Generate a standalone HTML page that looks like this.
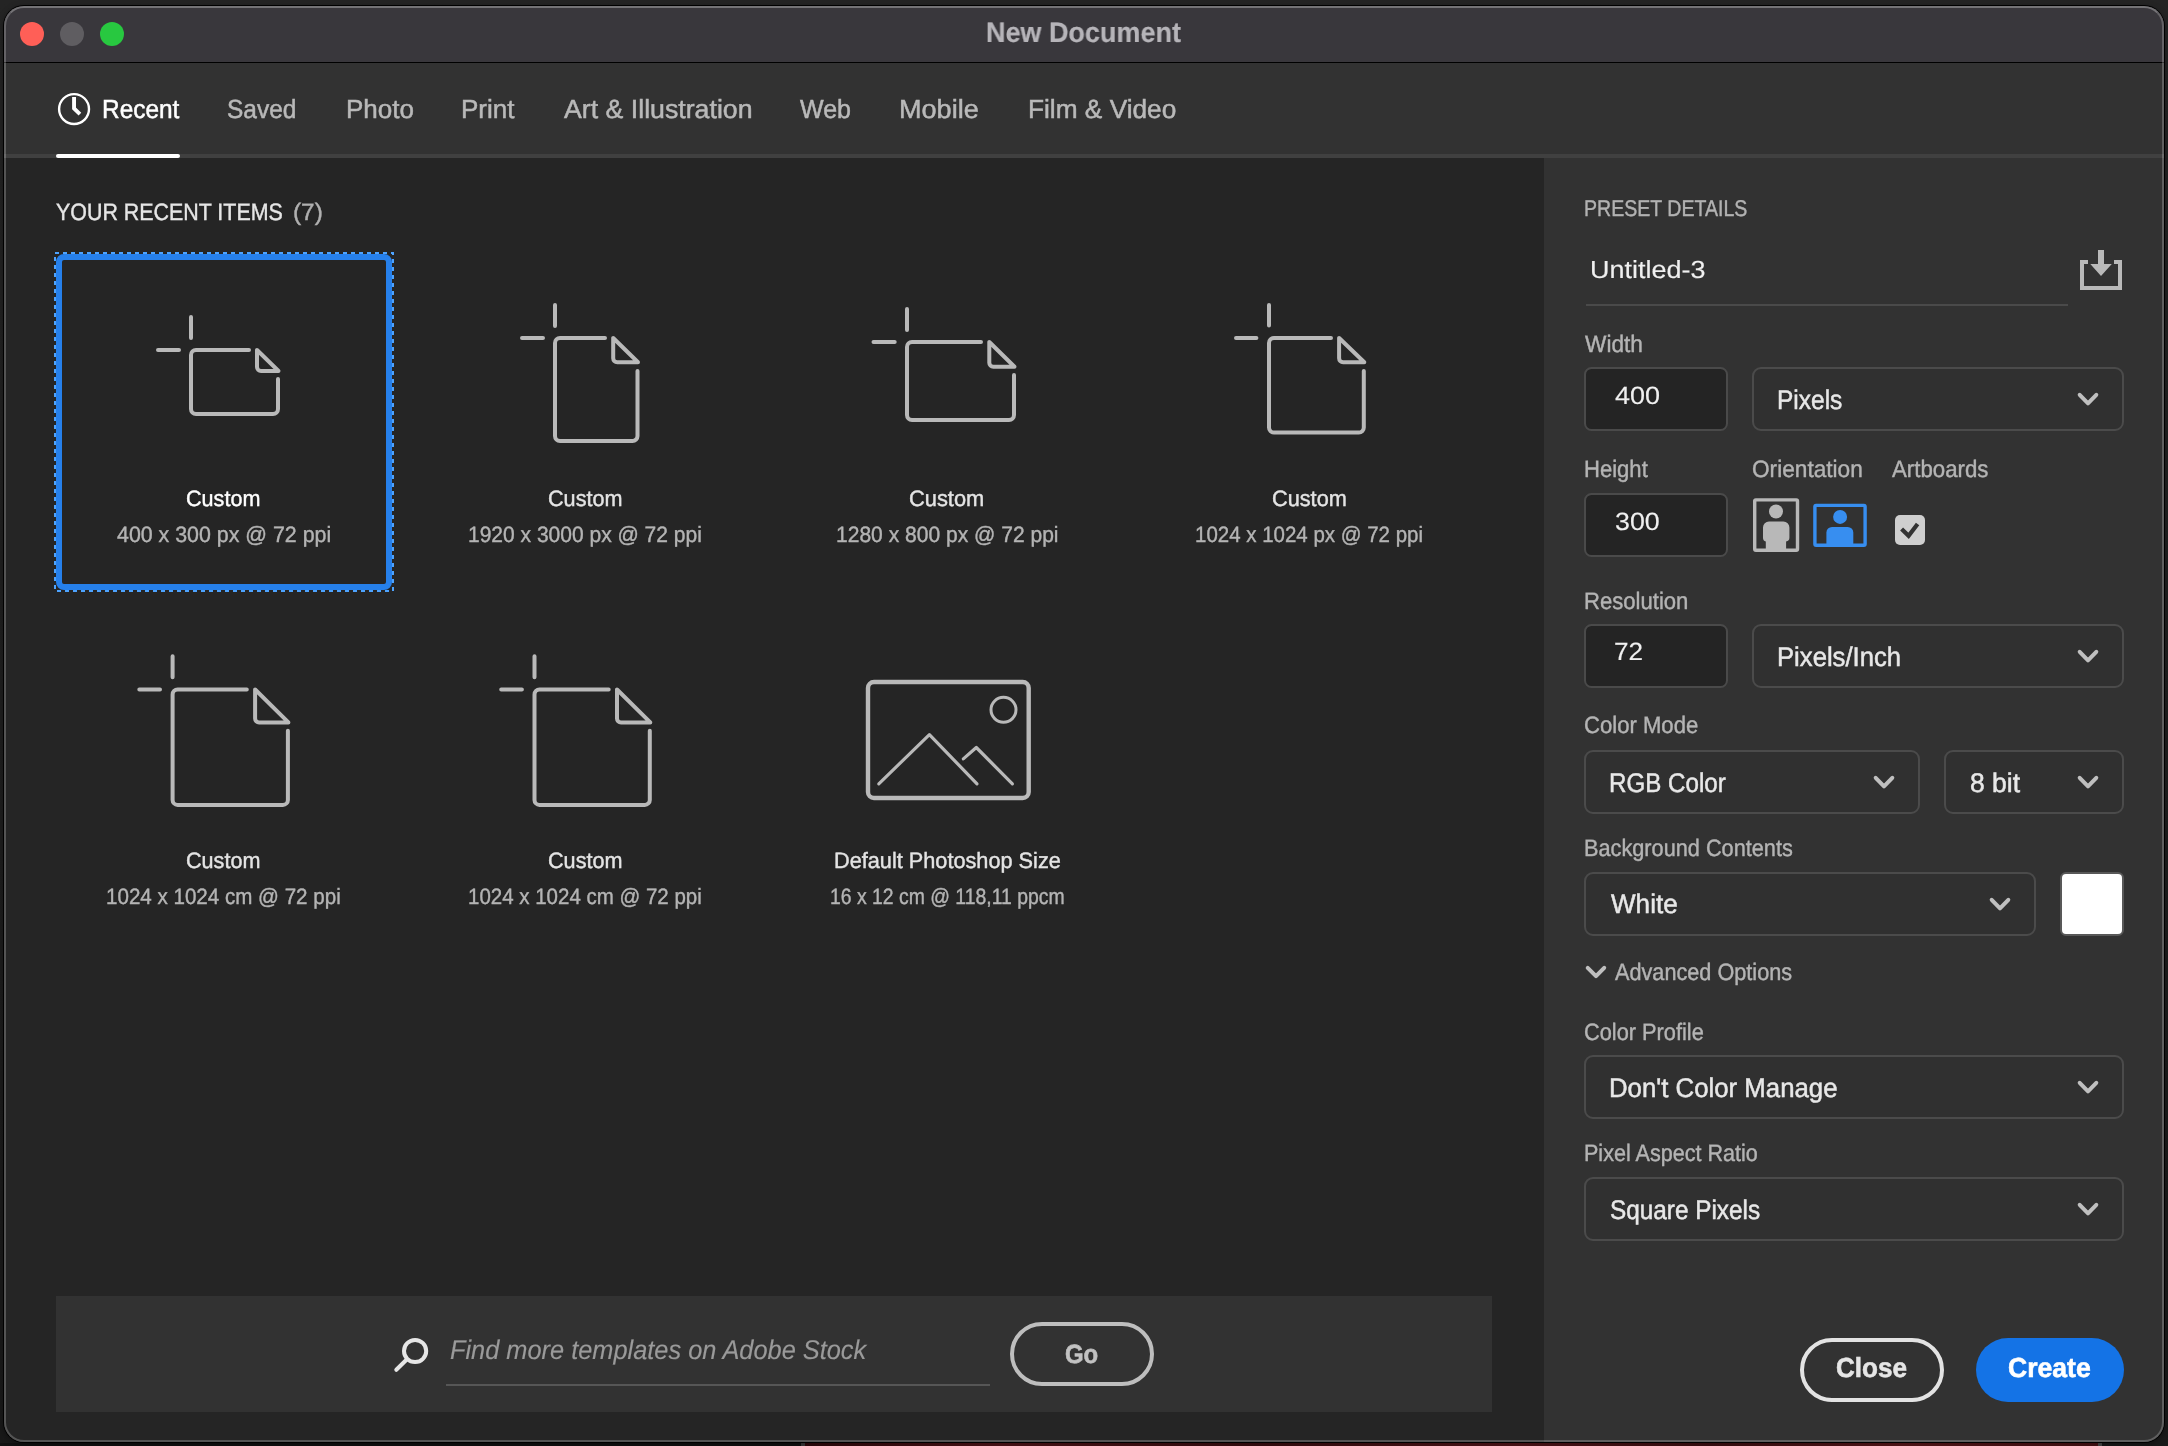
<!DOCTYPE html>
<html lang="en">
<head>
<meta charset="utf-8">
<title>New Document</title>
<style>
html,body{margin:0;padding:0;}
body{width:2168px;height:1446px;overflow:hidden;background:linear-gradient(#242424,#1f1f1f 50%,#191919);position:relative;font-family:'Liberation Sans', sans-serif;}
ul,li,h1,h2,label,header,nav,main,aside,footer,section{margin:0;padding:0;list-style:none;font-weight:normal;font-size:inherit;display:block;}
/* every component wrapper is a zero-size box anchored at the page origin; children use page coordinates */
.g,ul,li,h1,h2,label,nav,main,aside,footer,section,header{position:absolute;left:0;top:0;width:0;height:0;}
.layer{will-change:transform;}
.t{position:absolute;white-space:nowrap;transform-origin:0 0;display:block;text-rendering:geometricPrecision;}
svg{position:absolute;left:0;top:0;overflow:visible;}
/* desktop peeking out below the window */
#desk{position:absolute;left:801px;top:1443px;width:1293px;height:3px;background:linear-gradient(90deg,#30090c,#54151a 15%,#3c0e11 35%,#56161b 55%,#401013 70%,#5e181c 85%,#4a1215);border-left:4px solid #3c3c3c;border-right:4px solid #4c4c4c;}
#deskl{position:absolute;left:0;top:1443px;width:801px;height:3px;background:#121212;}
/* window chrome */
#win{position:absolute;left:4px;top:6px;width:2160px;height:1436px;border-radius:20px;background:#252525;box-shadow:0 0 0 1px #000,0 2px 6px 1px rgba(0,0,0,.35);overflow:hidden;}
#winedge{position:absolute;left:4px;top:6px;width:2160px;height:1436px;border-radius:20px;box-sizing:border-box;border:2px solid rgba(255,255,255,.22);border-top-color:rgba(255,255,255,.30);pointer-events:none;}
#inner{position:absolute;left:-4px;top:-6px;width:2168px;height:1446px;}
#titlebar-bg{position:absolute;left:0;top:0;width:2168px;height:62px;background:#39373c;}
#titleline{position:absolute;left:0;top:62px;width:2168px;height:1px;background:#000;}
.light{position:absolute;top:22px;width:24px;height:24px;border-radius:50%;}
/* category tabs */
#tabs-bg{position:absolute;left:0;top:63px;width:2168px;height:91px;background:#323232;}
#tabsep{position:absolute;left:0;top:154px;width:2168px;height:4px;background:#404040;}
#tabsel{position:absolute;left:56px;top:154px;width:124px;height:4px;border-radius:2px;background:#fff;}
/* recent items */
#main-bg{position:absolute;left:0;top:158px;width:1544px;height:1288px;background:#252525;}
.focus{position:absolute;left:54px;top:252px;width:340px;height:340px;}
.focus .ring{position:absolute;left:2px;top:2px;right:2px;bottom:2px;border:6px solid #2680eb;border-radius:8px;}
/* stock search */
#searchbox{position:absolute;left:56px;top:1296px;width:1436px;height:116px;background:#323232;}
#searchline{position:absolute;left:446px;top:1384px;width:544px;height:2px;background:#565656;}
#go{position:absolute;left:1010px;top:1322px;width:144px;height:64px;box-sizing:border-box;border:4px solid #bebebe;border-radius:32px;}
/* preset details */
#panel-bg{position:absolute;left:1544px;top:158px;width:624px;height:1288px;background:#323232;}
.inp{position:absolute;box-sizing:border-box;background:#242424;border:2px solid #4a4a4a;border-radius:7.5px;}
.dd{position:absolute;box-sizing:border-box;background:#303030;border:2px solid #4b4b4b;border-radius:9px;}
#nameline{position:absolute;left:1586px;top:304px;width:482px;height:2px;background:#4a4a4a;}
#swatch{position:absolute;left:2060px;top:872px;width:64px;height:64px;box-sizing:border-box;background:#fff;border:2px solid #585858;border-radius:6px;}
#check{position:absolute;left:1895px;top:515px;width:30px;height:30px;background:#cfcfcf;border-radius:5px;}
#close{position:absolute;left:1800px;top:1338px;width:144.4px;height:64px;box-sizing:border-box;border:4px solid #e3e3e3;border-radius:32px;}
#create{position:absolute;left:1976px;top:1338px;width:148px;height:64px;background:#1473e6;border-radius:32px;}
</style>
</head>
<body>
<div id="deskl"></div><div id="desk"></div>
<div id="win"><div id="inner">

<header class="layer" id="titlebar">
  <div id="titlebar-bg"></div>
  <div class="g" id="traffic-lights">
    <div class="light" style="left:20px;background:#ff5f57"></div>
    <div class="light" style="left:60px;background:#5f5d61"></div>
    <div class="light" style="left:100px;background:#28c840"></div>
  </div>
  <div id="titleline"></div>
</header>
<h1 class="layer" id="title"><span class="t" style="left:986.04px;top:18px;font-size:28.25px;line-height:28.25px;color:#b6b4b9;transform:scaleX(0.9551);-webkit-text-stroke:0.2px #b6b4b9;font-weight:bold">New Document</span></h1>

<div id="tabs-bg"></div>
<div id="tabsep"></div>
<nav class="layer" id="tabs">
  <ul>
    <li class="g tab active">
      <svg width="2168" height="200" viewBox="0 0 2168 200" fill="none" stroke="#fff" stroke-linecap="round" stroke-linejoin="round">
        <circle cx="74.05" cy="109.05" r="14.95" stroke-width="2.4"/>
        <path d="M74.05 96.9 V108.5 L79.9 114.1" stroke-width="3.9" stroke-linecap="butt" stroke-linejoin="miter"/>
      </svg>
      <span class="t" style="left:101.84px;top:96px;font-size:26.25px;line-height:26.25px;color:#ffffff;transform:scaleX(0.9306);-webkit-text-stroke:0.5px #ffffff">Recent</span>
      <div id="tabsel"></div>
    </li>
<li class="g tab"><span class="t" style="left:227.27px;top:96px;font-size:26.25px;line-height:26.25px;color:#b9b9b9;transform:scaleX(0.9327);-webkit-text-stroke:0.5px #b9b9b9">Saved</span></li>
<li class="g tab"><span class="t" style="left:345.62px;top:96px;font-size:26.25px;line-height:26.25px;color:#b9b9b9;transform:scaleX(0.9909);-webkit-text-stroke:0.5px #b9b9b9">Photo</span></li>
<li class="g tab"><span class="t" style="left:461.12px;top:96px;font-size:26.25px;line-height:26.25px;color:#b9b9b9;transform:scaleX(0.9909);-webkit-text-stroke:0.5px #b9b9b9">Print</span></li>
<li class="g tab"><span class="t" style="left:564px;top:96px;font-size:26.25px;line-height:26.25px;color:#b9b9b9;transform:scaleX(1.0176);-webkit-text-stroke:0.5px #b9b9b9">Art &amp; Illustration</span></li>
<li class="g tab"><span class="t" style="left:800.1px;top:96px;font-size:26.25px;line-height:26.25px;color:#b9b9b9;transform:scaleX(0.9527);-webkit-text-stroke:0.5px #b9b9b9">Web</span></li>
<li class="g tab"><span class="t" style="left:899.04px;top:96px;font-size:26.25px;line-height:26.25px;color:#b9b9b9;transform:scaleX(1.0317);-webkit-text-stroke:0.5px #b9b9b9">Mobile</span></li>
<li class="g tab"><span class="t" style="left:1027.5px;top:96px;font-size:26.25px;line-height:26.25px;color:#b9b9b9;transform:scaleX(0.9998);-webkit-text-stroke:0.5px #b9b9b9">Film &amp; Video</span></li>
  </ul>
</nav>

<div id="main-bg"></div>
<main class="layer" id="recent">
  <h2><span class="t" style="left:55.7px;top:201px;font-size:23.75px;line-height:23.75px;color:#e6e6e6;transform:scaleX(0.9013);-webkit-text-stroke:0.42px #e6e6e6">YOUR RECENT ITEMS</span><span class="t" style="left:293.17px;top:201px;font-size:23.75px;line-height:23.75px;color:#b0b0b0;transform:scaleX(1.0252);-webkit-text-stroke:0.42px #b0b0b0">(7)</span></h2>
  <ul class="cards">
<li class="card selected"><div class="focus"><svg width="340" height="340" viewBox="0 0 340 340" fill="none"><rect x="1" y="1" width="338" height="338" stroke="#4da3ff" stroke-width="2" stroke-dasharray="4 4"/></svg><div class="ring"></div></div><svg class="ico" width="1544" height="1000" viewBox="0 0 1544 1000" fill="none" stroke="#b9b9b9" stroke-width="4" stroke-linecap="round" stroke-linejoin="round"><path d="M191 317 V338 M158 350 H179"/><path d="M249 350 H196 a5 5 0 0 0 -5 5 V409 a5 5 0 0 0 5 5 H273 a5 5 0 0 0 5 -5 V379"/><path d="M257 350 V367 a4 4 0 0 0 4 4 H278.5 Z"/></svg><div class="g name"><span class="t" style="left:186.13px;top:488px;font-size:22.25px;line-height:22.25px;color:#ffffff;transform:scaleX(0.9704);-webkit-text-stroke:0.42px #ffffff">Custom</span></div><div class="g meta"><span class="t" style="left:116.8px;top:524px;font-size:22.25px;line-height:22.25px;color:#b4b4b4;transform:scaleX(0.9606);-webkit-text-stroke:0.42px #b4b4b4">400 x 300 px @ 72 ppi</span></div></li>
<li class="card"><svg class="ico" width="1544" height="1000" viewBox="0 0 1544 1000" fill="none" stroke="#b9b9b9" stroke-width="4" stroke-linecap="round" stroke-linejoin="round"><path d="M555 305 V326 M522 338 H543"/><path d="M605 338 H560 a5 5 0 0 0 -5 5 V436 a5 5 0 0 0 5 5 H632.5 a5 5 0 0 0 5 -5 V371"/><path d="M613.2 338 V358.3 a4 4 0 0 0 4 4 H638 Z"/></svg><div class="g name"><span class="t" style="left:548.03px;top:488px;font-size:22.25px;line-height:22.25px;color:#e4e4e4;transform:scaleX(0.9717);-webkit-text-stroke:0.42px #e4e4e4">Custom</span></div><div class="g meta"><span class="t" style="left:468.26px;top:524px;font-size:22.25px;line-height:22.25px;color:#b4b4b4;transform:scaleX(0.9439);-webkit-text-stroke:0.42px #b4b4b4">1920 x 3000 px @ 72 ppi</span></div></li>
<li class="card"><svg class="ico" width="1544" height="1000" viewBox="0 0 1544 1000" fill="none" stroke="#b9b9b9" stroke-width="4" stroke-linecap="round" stroke-linejoin="round"><path d="M907 309 V330 M873.5 342 H894.7"/><path d="M981 342 H912 a5 5 0 0 0 -5 5 V415 a5 5 0 0 0 5 5 H1009 a5 5 0 0 0 5 -5 V375"/><path d="M989.3 342 V362.7 a4 4 0 0 0 4 4 H1014.5 Z"/></svg><div class="g name"><span class="t" style="left:909.32px;top:488px;font-size:22.25px;line-height:22.25px;color:#e4e4e4;transform:scaleX(0.9810);-webkit-text-stroke:0.42px #e4e4e4">Custom</span></div><div class="g meta"><span class="t" style="left:836.35px;top:524px;font-size:22.25px;line-height:22.25px;color:#b4b4b4;transform:scaleX(0.9455);-webkit-text-stroke:0.42px #b4b4b4">1280 x 800 px @ 72 ppi</span></div></li>
<li class="card"><svg class="ico" width="1544" height="1000" viewBox="0 0 1544 1000" fill="none" stroke="#b9b9b9" stroke-width="4" stroke-linecap="round" stroke-linejoin="round"><path d="M1269 305 V325.5 M1236 338 H1256.4"/><path d="M1331 338 H1274 a5 5 0 0 0 -5 5 V427.6 a5 5 0 0 0 5 5 H1358.8 a5 5 0 0 0 5 -5 V371"/><path d="M1339.1 338 V358.3 a4 4 0 0 0 4 4 H1364.3 Z"/></svg><div class="g name"><span class="t" style="left:1272.02px;top:488px;font-size:22.25px;line-height:22.25px;color:#e4e4e4;transform:scaleX(0.9757);-webkit-text-stroke:0.42px #e4e4e4">Custom</span></div><div class="g meta"><span class="t" style="left:1195.38px;top:524px;font-size:22.25px;line-height:22.25px;color:#b4b4b4;transform:scaleX(0.9203);-webkit-text-stroke:0.42px #b4b4b4">1024 x 1024 px @ 72 ppi</span></div></li>
<li class="card"><svg class="ico" width="1544" height="1000" viewBox="0 0 1544 1000" fill="none" stroke="#b9b9b9" stroke-width="4" stroke-linecap="round" stroke-linejoin="round"><path d="M172.6 656.2 V677.2 M139.3 689.5 H160"/><path d="M246.8 689.5 H177.6 a5 5 0 0 0 -5 5 V799.9 a5 5 0 0 0 5 5 H282.9 a5 5 0 0 0 5 -5 V730.7"/><path d="M255.1 689.5 V718.4 a4 4 0 0 0 4 4 H288.4 Z"/></svg><div class="g name"><span class="t" style="left:186.13px;top:850px;font-size:22.25px;line-height:22.25px;color:#e4e4e4;transform:scaleX(0.9704);-webkit-text-stroke:0.42px #e4e4e4">Custom</span></div><div class="g meta"><span class="t" style="left:105.88px;top:886px;font-size:22.25px;line-height:22.25px;color:#b4b4b4;transform:scaleX(0.9244);-webkit-text-stroke:0.42px #b4b4b4">1024 x 1024 cm @ 72 ppi</span></div></li>
<li class="card"><svg class="ico" width="1544" height="1000" viewBox="0 0 1544 1000" fill="none" stroke="#b9b9b9" stroke-width="4" stroke-linecap="round" stroke-linejoin="round"><path d="M534.5 656.2 V677.2 M501.2 689.5 H521.9"/><path d="M608.7 689.5 H539.5 a5 5 0 0 0 -5 5 V799.9 a5 5 0 0 0 5 5 H644.8 a5 5 0 0 0 5 -5 V730.7"/><path d="M617 689.5 V718.4 a4 4 0 0 0 4 4 H650.3 Z"/></svg><div class="g name"><span class="t" style="left:548.03px;top:850px;font-size:22.25px;line-height:22.25px;color:#e4e4e4;transform:scaleX(0.9717);-webkit-text-stroke:0.42px #e4e4e4">Custom</span></div><div class="g meta"><span class="t" style="left:468.08px;top:886px;font-size:22.25px;line-height:22.25px;color:#b4b4b4;transform:scaleX(0.9208);-webkit-text-stroke:0.42px #b4b4b4">1024 x 1024 cm @ 72 ppi</span></div></li>
<li class="card"><svg class="ico" width="1544" height="1000" viewBox="0 0 1544 1000" fill="none" stroke="#b9b9b9" stroke-width="4" stroke-linecap="round" stroke-linejoin="round"><rect x="868" y="682" width="160.7" height="116" rx="6" stroke-width="4.4"/><circle cx="1003.5" cy="709.8" r="12.5" stroke-width="3"/><path d="M878.8 783.8 L929.4 734.7 L977 783.8 M963.3 758.9 L976.3 747.5 L1012.4 783.8" stroke-width="3.2"/></svg><div class="g name"><span class="t" style="left:834.32px;top:850px;font-size:22.25px;line-height:22.25px;color:#e4e4e4;transform:scaleX(0.9755);-webkit-text-stroke:0.42px #e4e4e4">Default Photoshop Size</span></div><div class="g meta"><span class="t" style="left:829.83px;top:886px;font-size:22.25px;line-height:22.25px;color:#b4b4b4;transform:scaleX(0.8719);-webkit-text-stroke:0.42px #b4b4b4">16 x 12 cm @ 118,11 ppcm</span></div></li>
  </ul>
</main>

<div id="searchbox"></div>
<footer class="layer" id="stock-search">
  <svg width="1544" height="1446" viewBox="0 0 1544 1446" fill="none" stroke="#e6e6e6" stroke-width="4" stroke-linecap="round">
    <circle cx="415.1" cy="1351" r="11.1"/>
    <path d="M407 1359.3 L396.3 1369.8"/>
  </svg>
  <div class="g searchfield"><span class="t" style="left:449.6px;top:1337px;font-size:27px;line-height:27px;color:#9a9a9a;transform:scaleX(0.9390);-webkit-text-stroke:0.15px #9a9a9a;font-style:italic">Find more templates on Adobe Stock</span><div id="searchline"></div></div>
  <div class="g button"><div id="go"></div><span class="t" style="left:1064.79px;top:1341px;font-size:26.25px;line-height:26.25px;color:#c2c2c2;transform:scaleX(0.9120);-webkit-text-stroke:0.6px #c2c2c2;font-weight:bold">Go</span></div>
</footer>

<div id="panel-bg"></div>
<aside class="layer" id="preset-details">
  <h2><span class="t" style="left:1583.94px;top:197px;font-size:22.75px;line-height:22.75px;color:#b2b2b2;transform:scaleX(0.8592);-webkit-text-stroke:0.42px #b2b2b2">PRESET DETAILS</span></h2>
  <section id="preset-name">
    <span class="t" style="left:1590.11px;top:259px;font-size:24.75px;line-height:24.75px;color:#f0f0f0;transform:scaleX(1.0897);-webkit-text-stroke:0.15px #f0f0f0">Untitled-3</span>
    <div id="nameline"></div>
    <svg width="2168" height="1446" viewBox="0 0 2168 1446" fill="none">
      <path d="M2088 262 H2082 V288 H2120 V262 H2114" stroke="#b9b9b9" stroke-width="4"/>
      <path d="M2098 250 H2104 V264 H2111.8 L2101 276 L2090.3 264 H2098 Z" fill="#b9b9b9"/>
    </svg>
  </section>
  <section id="field-width">
    <label class="g"><span class="t" style="left:1584.8px;top:333px;font-size:23.75px;line-height:23.75px;color:#b4b4b4;transform:scaleX(0.9546);-webkit-text-stroke:0.42px #b4b4b4">Width</span></label>
    <div class="g input"><div class="inp" style="left:1584px;top:367px;width:144px;height:64px"></div><span class="t" style="left:1614.8px;top:384px;font-size:25px;line-height:25px;color:#f0f0f0;transform:scaleX(1.0807);-webkit-text-stroke:0.15px #f0f0f0">400</span></div>
    <div class="g select"><div class="dd" style="left:1752px;top:367px;width:372px;height:64px"></div><span class="t" style="left:1777.18px;top:387px;font-size:27px;line-height:27px;color:#e8e8e8;transform:scaleX(0.9076);-webkit-text-stroke:0.5px #e8e8e8">Pixels</span><svg class="chev" width="2168" height="1446" viewBox="0 0 2168 1446" fill="none" stroke="#bfbfbf" stroke-width="4" stroke-linecap="round" stroke-linejoin="round"><path d="M2079.7 394.8 L2088 403.4 L2096.3 394.8"/></svg></div>
  </section>
  <section id="field-height">
    <label class="g"><span class="t" style="left:1583.77px;top:458px;font-size:23.75px;line-height:23.75px;color:#b4b4b4;transform:scaleX(0.9287);-webkit-text-stroke:0.42px #b4b4b4">Height</span></label>
    <div class="g input"><div class="inp" style="left:1584px;top:493px;width:144px;height:64px"></div><span class="t" style="left:1614.6px;top:510px;font-size:25px;line-height:25px;color:#f0f0f0;transform:scaleX(1.0709);-webkit-text-stroke:0.15px #f0f0f0">300</span></div>
  </section>
  <section id="field-orientation">
    <label class="g"><span class="t" style="left:1751.75px;top:458px;font-size:23.75px;line-height:23.75px;color:#b4b4b4;transform:scaleX(0.9538);-webkit-text-stroke:0.42px #b4b4b4">Orientation</span></label>
    <svg width="2168" height="1446" viewBox="0 0 2168 1446" fill="none">
      <g class="portrait">
        <rect x="1754.7" y="499.9" width="42.8" height="50.4" rx="1.2" stroke="#b8b8b8" stroke-width="3.4"/>
        <circle cx="1776" cy="511.5" r="7" fill="#b8b8b8"/>
        <path d="M1763 527.5 a6 6 0 0 1 6 -6 h14.4 a6 6 0 0 1 6 6 v10.3 a3.6 3.6 0 0 1 -3.3 3.6 v8 h-20.3 v-8 a3.6 3.6 0 0 1 -2.8 -3.6 Z" fill="#b8b8b8"/>
      </g>
      <g class="landscape selected">
        <rect x="1814.9" y="505.4" width="50.2" height="39.9" rx="1.2" stroke="#378ef0" stroke-width="3.4"/>
        <circle cx="1840.1" cy="516.9" r="7" fill="#378ef0"/>
        <path d="M1826.4 545 v-12.5 a5.6 5.6 0 0 1 5.6 -5.6 h15.7 a5.6 5.6 0 0 1 5.6 5.6 v12.5 Z" fill="#378ef0"/>
      </g>
    </svg>
  </section>
  <section id="field-artboards">
    <label class="g"><span class="t" style="left:1891.9px;top:458px;font-size:23.75px;line-height:23.75px;color:#b4b4b4;transform:scaleX(0.9361);-webkit-text-stroke:0.42px #b4b4b4">Artboards</span></label>
    <div id="check"></div>
    <svg width="2168" height="1446" viewBox="0 0 2168 1446" fill="none"><path d="M1901.6 529 L1908.6 535.8 L1917.6 524" stroke="#323232" stroke-width="4.2"/></svg>
  </section>
  <section id="field-resolution">
    <label class="g"><span class="t" style="left:1583.77px;top:590px;font-size:23.75px;line-height:23.75px;color:#b4b4b4;transform:scaleX(0.9299);-webkit-text-stroke:0.42px #b4b4b4">Resolution</span></label>
    <div class="g input"><div class="inp" style="left:1584px;top:624px;width:144px;height:64px"></div><span class="t" style="left:1613.55px;top:640px;font-size:25px;line-height:25px;color:#f0f0f0;transform:scaleX(1.0462);-webkit-text-stroke:0.15px #f0f0f0">72</span></div>
    <div class="g select"><div class="dd" style="left:1752px;top:624px;width:372px;height:64px"></div><span class="t" style="left:1776.9px;top:644px;font-size:27px;line-height:27px;color:#e8e8e8;transform:scaleX(0.9503);-webkit-text-stroke:0.5px #e8e8e8">Pixels/Inch</span><svg class="chev" width="2168" height="1446" viewBox="0 0 2168 1446" fill="none" stroke="#bfbfbf" stroke-width="4" stroke-linecap="round" stroke-linejoin="round"><path d="M2079.7 651.8 L2088 660.4 L2096.3 651.8"/></svg></div>
  </section>
  <section id="field-colormode">
    <label class="g"><span class="t" style="left:1583.77px;top:714px;font-size:23.75px;line-height:23.75px;color:#b4b4b4;transform:scaleX(0.9305);-webkit-text-stroke:0.42px #b4b4b4">Color Mode</span></label>
    <div class="g select"><div class="dd" style="left:1584px;top:750px;width:336px;height:64px"></div><span class="t" style="left:1609.11px;top:770px;font-size:27px;line-height:27px;color:#e8e8e8;transform:scaleX(0.8947);-webkit-text-stroke:0.5px #e8e8e8">RGB Color</span><svg class="chev" width="2168" height="1446" viewBox="0 0 2168 1446" fill="none" stroke="#bfbfbf" stroke-width="4" stroke-linecap="round" stroke-linejoin="round"><path d="M1875.7 777.8 L1884 786.4 L1892.3 777.8"/></svg></div>
    <div class="g select"><div class="dd" style="left:1944px;top:750px;width:180px;height:64px"></div><span class="t" style="left:1969.52px;top:770px;font-size:27px;line-height:27px;color:#e8e8e8;transform:scaleX(0.9816);-webkit-text-stroke:0.5px #e8e8e8">8 bit</span><svg class="chev" width="2168" height="1446" viewBox="0 0 2168 1446" fill="none" stroke="#bfbfbf" stroke-width="4" stroke-linecap="round" stroke-linejoin="round"><path d="M2079.7 777.8 L2088 786.4 L2096.3 777.8"/></svg></div>
  </section>
  <section id="field-background">
    <label class="g"><span class="t" style="left:1583.79px;top:837px;font-size:23.75px;line-height:23.75px;color:#b4b4b4;transform:scaleX(0.9142);-webkit-text-stroke:0.42px #b4b4b4">Background Contents</span></label>
    <div class="g select"><div class="dd" style="left:1584px;top:872px;width:452px;height:64px"></div><span class="t" style="left:1610.9px;top:891px;font-size:27px;line-height:27px;color:#e8e8e8;transform:scaleX(0.9662);-webkit-text-stroke:0.5px #e8e8e8">White</span><svg class="chev" width="2168" height="1446" viewBox="0 0 2168 1446" fill="none" stroke="#bfbfbf" stroke-width="4" stroke-linecap="round" stroke-linejoin="round"><path d="M1991.7 899.8 L2000 908.4 L2008.3 899.8"/></svg></div>
    <div id="swatch"></div>
  </section>
  <section id="advanced">
    <svg width="2168" height="1446" viewBox="0 0 2168 1446" fill="none" stroke="#bfbfbf" stroke-width="4" stroke-linecap="round" stroke-linejoin="round"><path d="M1587.7 967.8 L1596 976.2 L1604.2 967.8"/></svg>
    <span class="t" style="left:1614.6px;top:961px;font-size:23.75px;line-height:23.75px;color:#b4b4b4;transform:scaleX(0.9124);-webkit-text-stroke:0.42px #b4b4b4">Advanced Options</span>
    <section id="field-profile">
      <label class="g"><span class="t" style="left:1583.78px;top:1021px;font-size:23.75px;line-height:23.75px;color:#b4b4b4;transform:scaleX(0.9169);-webkit-text-stroke:0.42px #b4b4b4">Color Profile</span></label>
      <div class="g select"><div class="dd" style="left:1584px;top:1055px;width:540px;height:64px"></div><span class="t" style="left:1608.99px;top:1075px;font-size:27px;line-height:27px;color:#e8e8e8;transform:scaleX(0.9549);-webkit-text-stroke:0.5px #e8e8e8">Don't Color Manage</span><svg class="chev" width="2168" height="1446" viewBox="0 0 2168 1446" fill="none" stroke="#bfbfbf" stroke-width="4" stroke-linecap="round" stroke-linejoin="round"><path d="M2079.7 1082.8 L2088 1091.4 L2096.3 1082.8"/></svg></div>
    </section>
    <section id="field-par">
      <label class="g"><span class="t" style="left:1583.79px;top:1142px;font-size:23.75px;line-height:23.75px;color:#b4b4b4;transform:scaleX(0.9074);-webkit-text-stroke:0.42px #b4b4b4">Pixel Aspect Ratio</span></label>
      <div class="g select"><div class="dd" style="left:1584px;top:1177px;width:540px;height:64px"></div><span class="t" style="left:1610px;top:1197px;font-size:27px;line-height:27px;color:#e8e8e8;transform:scaleX(0.9013);-webkit-text-stroke:0.5px #e8e8e8">Square Pixels</span><svg class="chev" width="2168" height="1446" viewBox="0 0 2168 1446" fill="none" stroke="#bfbfbf" stroke-width="4" stroke-linecap="round" stroke-linejoin="round"><path d="M2079.7 1204.8 L2088 1213.4 L2096.3 1204.8"/></svg></div>
    </section>
  </section>
  <div class="g actions">
    <div class="g button"><div id="close"></div><span class="t" style="left:1835.55px;top:1354px;font-size:27.5px;line-height:27.5px;color:#e6e6e6;transform:scaleX(0.9471);-webkit-text-stroke:0.6px #e6e6e6;font-weight:bold">Close</span></div>
    <div class="g button primary"><div id="create"></div><span class="t" style="left:2007.83px;top:1354px;font-size:27.5px;line-height:27.5px;color:#ffffff;transform:scaleX(0.9655);-webkit-text-stroke:0.6px #ffffff;font-weight:bold">Create</span></div>
  </div>
</aside>

</div></div>
<div id="winedge"></div>
</body>
</html>
